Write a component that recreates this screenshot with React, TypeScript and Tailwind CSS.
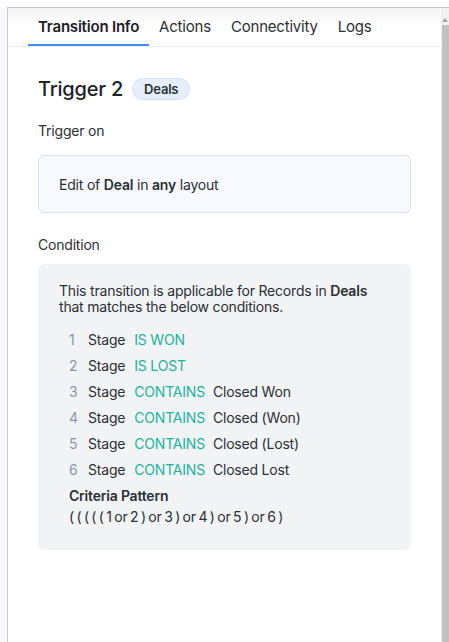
const conditions = [
  { n: 1, op: "IS WON", value: "" },
  { n: 2, op: "IS LOST", value: "" },
  { n: 3, op: "CONTAINS", value: "Closed Won" },
  { n: 4, op: "CONTAINS", value: "Closed (Won)" },
  { n: 5, op: "CONTAINS", value: "Closed (Lost)" },
  { n: 6, op: "CONTAINS", value: "Closed Lost" },
];

const tabs = ["Transition Info", "Actions", "Connectivity", "Logs"];

export default function App() {
  return (
    <div
      className="flex h-[642px] w-[449px] flex-col overflow-hidden bg-white pt-[7px] tracking-[-0.2px] text-[#2b2f36]"
      style={{ fontFamily: "Inter, 'Noto Sans', sans-serif" }}
    >
      <div className="flex min-h-0 flex-1">
        <div className="w-[7px] shrink-0 bg-[#f6f8fc] mt-px" />
        <div className="flex min-w-0 flex-1 border-l border-t border-[#c8c8c8]">
          <main className="min-w-0 flex-1">
            <nav className="flex border-b border-[#ececec] bg-gradient-to-b from-[#f4f4f4] to-white to-40% pl-[20px]">
              {tabs.map((t, i) => (
                <div
                  key={t}
                  className={
                    i === 0
                      ? "border-b-2 border-[#3d8df5] px-[10px] pb-[8px] pt-[10px] text-[15px] font-semibold leading-[18px] text-[#1d2128]"
                      : "border-b-2 border-transparent px-[10px] pb-[8px] pt-[10px] text-[15px] leading-[18px] text-[#2b2f36]"
                  }
                >
                  {t}
                </div>
              ))}
            </nav>

            <section className="px-[30px] pt-[29px]">
              <div className="flex items-center gap-[9px]">
                <h1 className="text-[20px] font-medium leading-[26px] text-[#1d2128]">Trigger 2</h1>
                <span className="rounded-full border border-[#d3e2f5] bg-[#e5effc] px-[11px] py-[2px] text-[13px] font-semibold leading-[16px] text-[#2b2f36]">
                  Deals
                </span>
              </div>

              <p className="mt-[20px] text-[14px] leading-[18px]">Trigger on</p>
              <div className="mt-[15px] flex h-[58px] items-center rounded-[6px] border border-[#d6e0ee] bg-[#f7f9fe] px-[20px] text-[14px]">
                <span>
                  Edit of <b className="font-semibold">Deal</b> in <b className="font-semibold">any</b> layout
                </span>
              </div>

              <p className="mt-[23px] text-[14px] leading-[18px]">Condition</p>
              <div className="mt-[10px] rounded-[6px] bg-[#f2f3f5] pb-[23px] pl-[21px] pr-[20px] pt-[19px] text-[14px]">
                <p className="leading-[16px]">
                  This transition is applicable for Records in <b className="font-semibold">Deals</b>
                  <br />
                  that matches the below conditions.
                </p>
                <ul className="mt-[11px] pl-[10px]">
                  {conditions.map((c) => (
                    <li key={c.n} className="flex h-[26px] items-center">
                      <span className="w-[19px] text-[#8797ad]">{c.n}</span>
                      <span>Stage</span>
                      <span className="ml-[9px] text-[#1bb49e]">{c.op}</span>
                      {c.value ? <span className="ml-[8px]">{c.value}</span> : null}
                    </li>
                  ))}
                </ul>
                <div className="mt-[4px] pl-[10px]">
                  <p className="font-semibold leading-[20px]">Criteria Pattern</p>
                  <p className="mt-px leading-[20px] [word-spacing:-1.2px]">( ( ( ( ( 1 or 2 ) or 3 ) or 4 ) or 5 ) or 6 )</p>
                </div>
              </div>
            </section>
          </main>

          <div className="flex w-[8px] shrink-0 flex-col bg-[#f1f1f1]">
            <div className="flex h-[17px] items-end justify-center pb-[3px]">
              <div className="h-0 w-0 border-x-[3px] border-b-[4px] border-x-transparent border-b-[#a3a3a3]" />
            </div>
            <div className="ml-px flex-1 bg-[#c1c1c1]" />
          </div>
        </div>
      </div>
    </div>
  );
}
